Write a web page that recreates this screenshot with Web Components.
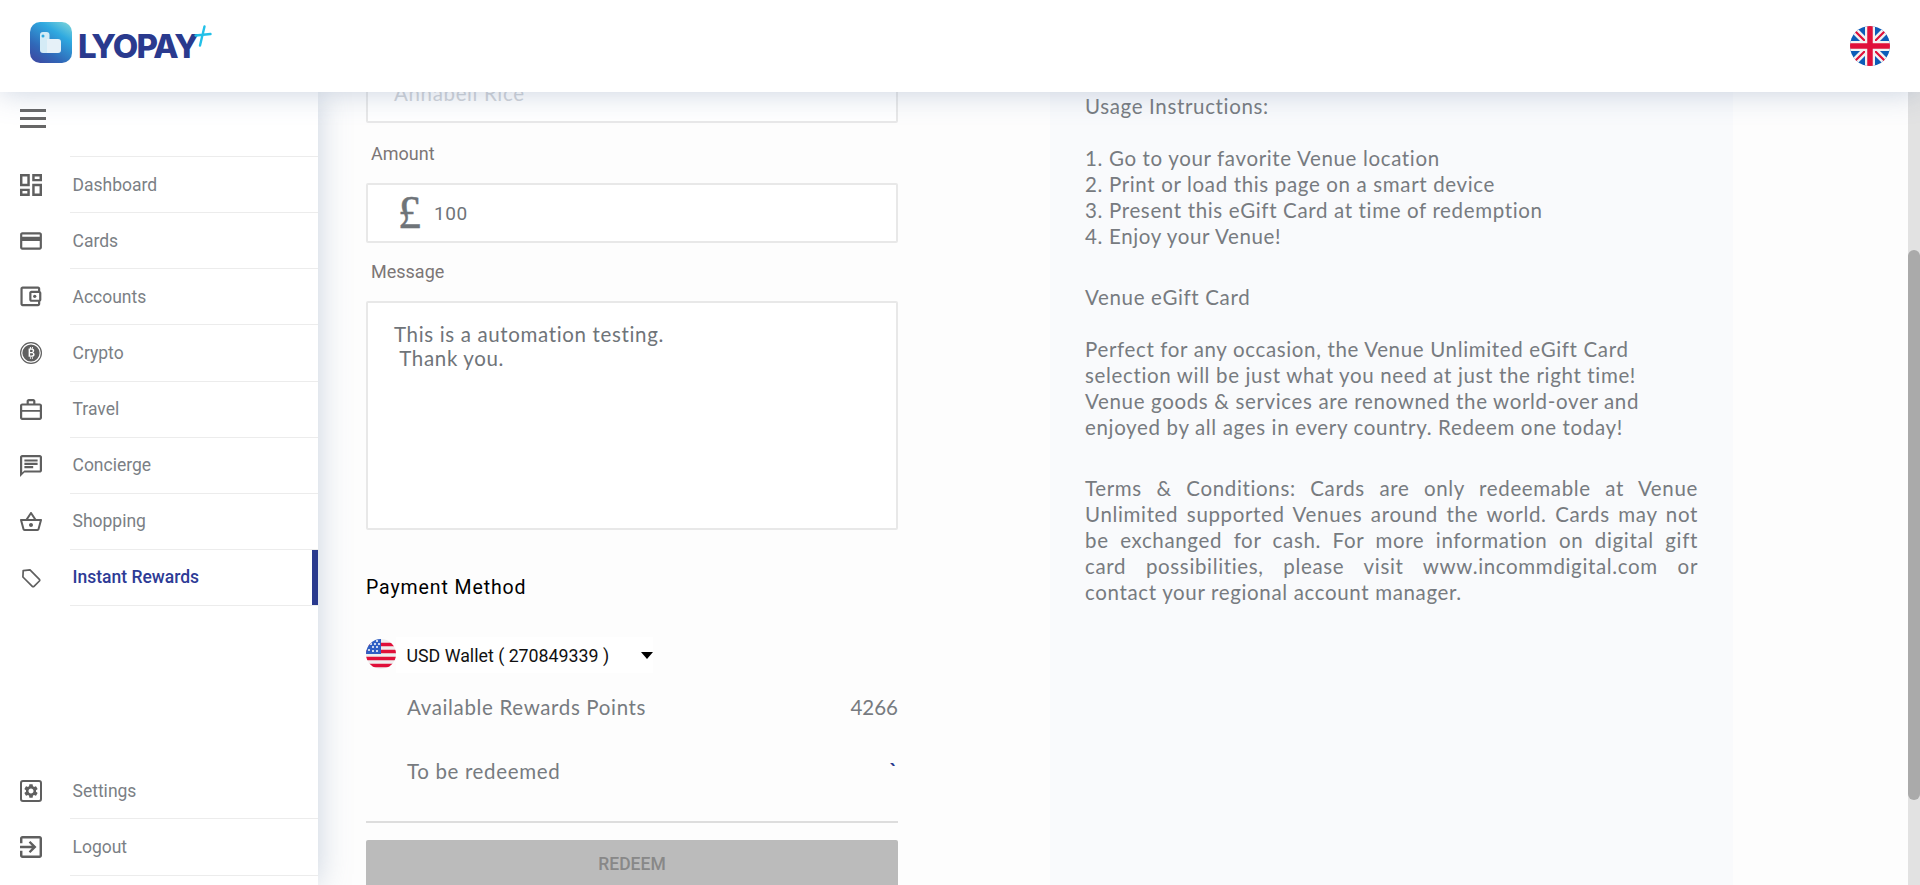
<!DOCTYPE html>
<html lang="en">
<head>
<meta charset="utf-8">
<title>Lyopay</title>
<style>
  html, body { margin: 0; height: 100%; overflow: hidden; background: #fdfdfd; }
  body { display: flex; flex-direction: column; font-family: "Roboto", sans-serif; }
</style>
</head>
<body>
<lp-header></lp-header>
<lp-shell>
  <lp-sidenav slot="nav">
    <lp-navitem label="Dashboard"><svg viewBox="3 3 18 18" width="22" height="22" fill="#5f5f5f"><path d="M19 5v2h-4V5h4M9 5v6H5V5h4m10 8v6h-4v-6h4M9 17v2H5v-2h4M21 3h-8v6h8V3zM11 3H3v10h8V3zm10 8h-8v10h8V11zm-10 4H3v6h8v-6z"/></svg></lp-navitem>
    <lp-navitem label="Cards"><svg viewBox="2 1 20 22" width="22" height="24" fill="#5f5f5f"><path d="M20 4H4c-1.11 0-1.99.89-1.99 2L2 18c0 1.11.89 2 2 2h16c1.11 0 2-.89 2-2V6c0-1.11-.89-2-2-2zm0 14H4v-6h16v6zm0-10H4V6h16v2z"/></svg></lp-navitem>
    <lp-navitem label="Accounts"><svg viewBox="2.6 2.6 20 20" width="22" height="22" fill="#5f5f5f"><path d="M21 7.28V5c0-1.1-.9-2-2-2H5c-1.11 0-2 .9-2 2v14c0 1.1.89 2 2 2h14c1.1 0 2-.9 2-2v-2.28c.59-.35 1-.98 1-1.72V9c0-.74-.41-1.37-1-1.72zM20 9v6h-7V9h7zM5 19V5h14v2h-6c-1.1 0-2 .9-2 2v6c0 1.1.9 2 2 2h6v2H5z"/><circle cx="16" cy="12" r="1.5"/></svg></lp-navitem>
    <lp-navitem label="Crypto"><svg viewBox="0 0 22 22" width="22" height="22"><circle cx="11" cy="11" r="10.4" fill="none" stroke="#5f5f5f" stroke-width="1.2"/><circle cx="11" cy="11" r="8.6" fill="#5f5f5f"/><path d="M8.6 6.4h3.2c1.5 0 2.4.9 2.4 2.1 0 .9-.5 1.6-1.2 1.9.9.3 1.6 1 1.6 2.1 0 1.5-1.1 2.3-2.8 2.3H8.6zm1.5 1.4v2.1h1.5c.7 0 1.1-.4 1.1-1s-.4-1.1-1.1-1.1zm0 3.4v2.2h1.7c.8 0 1.3-.4 1.3-1.1s-.5-1.1-1.3-1.1zM9.9 5h1v1.6h-1zm2 0h1v1.6h-1zm-2 10.2h1v1.6h-1zm2 0h1v1.6h-1z" fill="#fff"/></svg></lp-navitem>
    <lp-navitem label="Travel"><svg viewBox="2 2 20 20" width="22" height="22" fill="#5f5f5f"><path d="M14 6V4h-4v2h4zM4 8v11h16V8H4zm16-2c1.11 0 2 .89 2 2v11c0 1.11-.89 2-2 2H4c-1.11 0-2-.89-2-2l.01-11c0-1.11.88-2 1.99-2h4V4c0-1.11.89-2 2-2h4c1.11 0 2 .89 2 2v2h4z"/><path d="M3 12h18v1.6H3z"/></svg></lp-navitem>
    <lp-navitem label="Concierge"><svg viewBox="2 2 20 20" width="22" height="22" fill="#5f5f5f"><path d="M20 2H4c-1.1 0-2 .9-2 2v18l4-4h14c1.1 0 2-.9 2-2V4c0-1.1-.9-2-2-2zm0 14H6l-2 2V4h16v12z"/><path d="M6 12h8v2H6zm0-3h12v2H6zm0-3h12v2H6z"/></svg></lp-navitem>
    <lp-navitem label="Shopping"><svg viewBox="1 1 22 22" width="22" height="22" fill="#5f5f5f"><path d="M22 9h-4.79l-4.38-6.56c-.19-.28-.51-.42-.83-.42s-.64.14-.83.43L6.79 9H2c-.55 0-1 .45-1 1 0 .09.01.18.04.27l2.54 9.27c.23.84 1 1.46 1.92 1.46h13c.92 0 1.69-.62 1.93-1.46l2.54-9.27L23 10c0-.55-.45-1-1-1zM12 4.8L14.8 9H9.2L12 4.8zM18.5 19l-12.99.01L3.31 11H20.7l-2.2 8zM12 13c-1.1 0-2 .9-2 2s.9 2 2 2 2-.9 2-2-.9-2-2-2z"/></svg></lp-navitem>
    <lp-navitem label="Instant Rewards" active><svg viewBox="0 0 22 22" width="22" height="22" fill="none" stroke="#5f5f5f" stroke-width="1.7" stroke-linejoin="round"><path d="M3.2 3.6 10 2.9l9.4 9.4a1.2 1.2 0 0 1 0 1.7l-5.4 5.4a1.2 1.2 0 0 1-1.7 0L2.9 10z"/></svg></lp-navitem>
    <lp-navitem slot="bottom" label="Settings"><svg viewBox="0 0 22 22" width="22" height="22"><rect x="1" y="1" width="20" height="20" rx="2" fill="none" stroke="#5f5f5f" stroke-width="2"/><path transform="translate(2.6 2.6) scale(.7)" fill="#5f5f5f" d="M19.14 12.94c.04-.3.06-.61.06-.94 0-.32-.02-.64-.07-.94l2.03-1.58a.49.49 0 0 0 .12-.61l-1.92-3.32a.488.488 0 0 0-.59-.22l-2.39.96c-.5-.38-1.03-.7-1.62-.94l-.36-2.54a.484.484 0 0 0-.48-.41h-3.84c-.24 0-.43.17-.47.41l-.36 2.54c-.59.24-1.13.57-1.62.94l-2.39-.96c-.22-.08-.47 0-.59.22L2.74 8.87c-.12.21-.08.47.12.61l2.03 1.58c-.05.3-.09.63-.09.94s.02.64.07.94l-2.03 1.58a.49.49 0 0 0-.12.61l1.92 3.32c.12.22.37.29.59.22l2.39-.96c.5.38 1.03.7 1.62.94l.36 2.54c.05.24.24.41.48.41h3.84c.24 0 .44-.17.47-.41l.36-2.54c.59-.24 1.13-.56 1.62-.94l2.39.96c.22.08.47 0 .59-.22l1.92-3.32c.12-.22.07-.47-.12-.61l-2.01-1.58zM12 15.6c-1.98 0-3.6-1.62-3.6-3.6s1.62-3.6 3.6-3.6 3.6 1.62 3.6 3.6-1.62 3.6-3.6 3.6z"/></svg></lp-navitem>
    <lp-navitem slot="bottom" label="Logout"><svg viewBox="3 3 18 18" width="22" height="22" fill="#5f5f5f"><path d="M10.09 15.59L11.5 17l5-5-5-5-1.41 1.41L12.67 11H3v2h9.67l-2.58 2.59zM19 3H5c-1.11 0-2 .9-2 2v4h2V5h14v14H5v-4H3v4c0 1.1.89 2 2 2h14c1.1 0 2-.9 2-2V5c0-1.1-.9-2-2-2z"/></svg></lp-navitem>
  </lp-sidenav>

  <lp-redeem-form slot="form"></lp-redeem-form>

  <lp-info slot="info">
    <p>Usage Instructions:<br><br>1. Go to your favorite Venue location<br>2. Print or load this page on a smart device<br>3. Present this eGift Card at time of redemption<br>4. Enjoy your Venue!</p>
    <p>Venue eGift Card<br><br>Perfect for any occasion, the Venue Unlimited eGift Card<br>selection will be just what you need at just the right time!<br>Venue goods &amp; services are renowned the world-over and<br>enjoyed by all ages in every country. Redeem one today!</p>
    <div class="j">Terms &amp; Conditions: Cards are only redeemable at Venue</div>
    <div class="j">Unlimited supported Venues around the world. Cards may not</div>
    <div class="j">be exchanged for cash. For more information on digital gift</div>
    <div class="j">card possibilities, please visit www.incommdigital.com or</div>
    <div>contact your regional account manager.</div>
  </lp-info>
</lp-shell>

<script>
class LpHeader extends HTMLElement {
  constructor() {
    super();
    this.attachShadow({ mode: "open" });
    this.shadowRoot.innerHTML = `
      <style>
        :host {
          display: flex;
          flex: none;
          align-items: center;
          justify-content: space-between;
          height: 92px;
          padding: 0 30px;
          background: #fff;
          box-shadow: 0 0 30px rgba(110, 135, 170, .38);
          position: relative;
          z-index: 3;
        }
        .logo { display: flex; align-items: center; margin-top: -8px; }
        .name {
          margin: 8px 0 0 6px;
          font: 800 33px/1 "Inter", sans-serif;
          letter-spacing: -1.8px;
          color: #2a3a8e;
        }
        .plus { margin: -12px 0 0 -3px; }
        svg { display: block; }
      </style>
      <div class="logo">
        <svg width="42" height="41" viewBox="0 0 42 41">
          <defs>
            <linearGradient id="lg" x1="0.9" y1="0" x2="0.25" y2="1">
              <stop offset="0" stop-color="#7ad3da"/>
              <stop offset=".3" stop-color="#2fa9e0"/>
              <stop offset=".75" stop-color="#3068b8"/>
              <stop offset="1" stop-color="#3b4fa6"/>
            </linearGradient>
          </defs>
          <rect width="42" height="41" rx="10" fill="url(#lg)"/>
          <path d="M10 13a3 3 0 0 1 3-3h3.5a3 3 0 0 1 3 3v18h-6.5a3 3 0 0 1-3-3z" fill="#d4ebf6"/>
          <path d="M17 17h11a3 3 0 0 1 3 3v8a3 3 0 0 1-3 3H17z" fill="#e6f1f8"/>
          <circle cx="13" cy="14" r="1.5" fill="#2fa9e0"/>
        </svg>
        <span class="name">LYOPAY</span>
        <svg class="plus" width="18" height="22" viewBox="0 0 18 22" fill="none" stroke="#22c0e8" stroke-width="2.4" stroke-linecap="round"><path d="M1.5 10.5 16.5 9M10.5 1.5 6 20.5"/></svg>
      </div>
      <svg width="40" height="40" viewBox="0 0 40 40">
        <defs><clipPath id="uk"><circle cx="20" cy="20" r="20"/></clipPath></defs>
        <g clip-path="url(#uk)">
          <rect width="40" height="40" fill="#0d5cb8"/>
          <path d="M0 0 40 40M40 0 0 40" stroke="#f2f2f2" stroke-width="7"/>
          <path d="M2 2 16 16M24 24 38 38M38 2 24 16M16 24 2 38" stroke="#e0103a" stroke-width="2.2"/>
          <path d="M20 0V40M0 20H40" stroke="#f2f2f2" stroke-width="10"/>
          <path d="M20 0V40M0 20H40" stroke="#e0103a" stroke-width="5.5"/>
        </g>
      </svg>`;
  }
}

class LpShell extends HTMLElement {
  constructor() {
    super();
    this.attachShadow({ mode: "open" });
    this.shadowRoot.innerHTML = `
      <style>
        :host { display: flex; flex: 1; min-height: 0; }
        .view {
          flex: 1;
          display: grid;
          grid-template-columns: 732px 683px 1fr;
          overflow: hidden;
          background: #fdfdfd;
        }
        .track { flex: none; width: 12px; background: #e2e2e2; padding-top: 158px; box-sizing: border-box; }
        .thumb { height: 550px; background: #aaa; border-radius: 6px; }
      </style>
      <slot name="nav"></slot>
      <div class="view">
        <slot name="form"></slot>
        <slot name="info"></slot>
      </div>
      <div class="track"><div class="thumb"></div></div>`;
  }
}

class LpSidenav extends HTMLElement {
  constructor() {
    super();
    this.attachShadow({ mode: "open" });
    this.shadowRoot.innerHTML = `
      <style>
        :host {
          display: flex;
          flex-direction: column;
          flex: none;
          width: 318px;
          padding-bottom: 9.5px;
          box-sizing: border-box;
          background: #fff;
          box-shadow: 0 0 30px rgba(110, 135, 170, .36);
          position: relative;
          z-index: 2;
        }
        .burger { display: grid; gap: 5px; width: 26px; padding: 17px 0 28px 20px; }
        .burger i { display: block; height: 3px; background: #666; }
        .list::before { content: ""; display: block; height: 1px; margin-left: 70px; background: #ececec; }
        .bottom { margin-top: auto; }
      </style>
      <div class="burger"><i></i><i></i><i></i></div>
      <div class="list"><slot></slot></div>
      <div class="bottom"><slot name="bottom"></slot></div>`;
  }
}

class LpNavitem extends HTMLElement {
  constructor() {
    super();
    this.attachShadow({ mode: "open" });
    const active = this.hasAttribute("active");
    this.shadowRoot.innerHTML = `
      <style>
        :host { display: flex; align-items: center; height: 56.125px; }
        .icon { display: flex; flex: none; width: 22px; margin: 0 28px 0 20px; }
        .text {
          flex: 1;
          align-self: stretch;
          display: flex;
          align-items: center;
          padding-left: 2.5px;
          border-bottom: 1px solid #ececec;
          box-sizing: border-box;
          font-size: 17.5px;
          font-weight: ${active ? 500 : 400};
          color: ${active ? "#2d3b96" : "#7b7f85"};
          ${active ? "box-shadow: inset -6px 0 0 #2a3a8e;" : ""}
        }
      </style>
      <span class="icon"><slot></slot></span>
      <span class="text">${this.getAttribute("label")}</span>`;
  }
}

class LpField extends HTMLElement {
  constructor() {
    super();
    this.attachShadow({ mode: "open" });
    const h = this.getAttribute("height") || 60;
    const gap = this.getAttribute("gap") || 60;
    this.shadowRoot.innerHTML = `
      <style>
        :host { display: block; }
        .label {
          padding: 0 0 ${60 - gap}px 5px;
          height: ${gap}px;
          box-sizing: border-box;
          display: flex;
          align-items: center;
          font-size: 18px;
          color: #7c7676;
        }
        .box {
          display: flex;
          align-items: center;
          height: ${h}px;
          box-sizing: border-box;
          border: 2px solid #e8e8e8;
          border-radius: 2px;
          background: #fff;
        }
        :host(:not([label])) .label { display: none; }
      </style>
      <div class="label">${this.getAttribute("label") || ""}</div>
      <div class="box"><slot></slot></div>`;
  }
}

class LpRedeemForm extends HTMLElement {
  constructor() {
    super();
    this.attachShadow({ mode: "open" });
    this.shadowRoot.innerHTML = `
      <style>
        :host { display: block; padding: 0 0 0 48px; width: 532px; margin-top: -29px; font-family: "Roboto", sans-serif; }
        .ph { padding-left: 26px; font: 20.5px "Lato", sans-serif; letter-spacing: .65px; color: #d0d3d8; }
        .pound { margin-left: 30px; font: 46px/1 "Liberation Serif", serif; -webkit-text-stroke: .5px #6f7479; color: #6f7479; }
        .amount { margin-left: 13px; font-size: 19px; letter-spacing: .6px; color: #6f7479; }
        .msg {
          align-self: flex-start;
          padding: 19px 0 0 26px;
          font: 20.5px/24px "Lato", sans-serif;
          letter-spacing: .65px;
          white-space: pre;
          color: #6f7479;
        }
        h3 { margin: 44px 0 0; font-size: 19.5px; line-height: 28px; font-weight: 400; letter-spacing: .9px; color: #000; }
        .wallet { display: flex; align-items: center; margin-top: 37px; height: 30px; }
        .wallet svg { display: block; flex: none; }
        .select { display: flex; align-items: center; margin-top: 2px; padding-left: 10.5px; height: 36px; background: #fff; font-size: 17.8px; color: #111; }
        .caret { width: 0; height: 0; margin-left: 32px; border: 6px solid transparent; border-top: 7px solid #000; border-bottom: 0; }
        .row {
          display: flex;
          justify-content: space-between;
          padding-left: 41px;
          font: 20.5px/26px "Lato", sans-serif;
          letter-spacing: .65px;
          color: #777b80;
        }
        .num { letter-spacing: 0; }
        .r1 { margin-top: 25px; }
        .r2 { margin-top: 38px; }
        .tick { color: #2a3a8e; font-weight: 700; margin-top: -1px; }
        hr { margin: 37px 0 0; border: 0; height: 2px; background: #ddd; }
        .btn {
          margin-top: 17px;
          height: 60px;
          display: flex;
          justify-content: center;
          padding-top: 14px;
          box-sizing: border-box;
          border-radius: 2px;
          background: #bbb;
          font-size: 17.5px;
          font-weight: 500;
          color: #888;
        }
      </style>
      <lp-field><span class="ph">Annabell Rice</span></lp-field>
      <lp-field label="Amount"><span class="pound">£</span><span class="amount">100</span></lp-field>
      <lp-field label="Message" gap="58" height="229"><div class="msg">This is a automation testing.
 Thank you.</div></lp-field>
      <h3>Payment Method</h3>
      <div class="wallet">
        <svg width="30" height="30" viewBox="0 0 30 30">
          <defs><clipPath id="us"><circle cx="15" cy="15" r="15"/></clipPath></defs>
          <g clip-path="url(#us)">
            <rect width="30" height="30" fill="#efefef"/>
            <path d="M0 5.5H30M0 12.5H30M0 19.5H30M0 26.5H30" stroke="#e0103a" stroke-width="3.5"/>
            <rect width="15" height="15" fill="#2f5fc4"/>
            <g fill="#fff"><circle cx="5" cy="5" r="1"/><circle cx="9" cy="5" r="1"/><circle cx="13" cy="5" r="1"/><circle cx="11" cy="2" r="1"/><circle cx="7" cy="8" r="1"/><circle cx="11" cy="8" r="1"/><circle cx="3" cy="11" r="1"/><circle cx="7" cy="12" r="1"/><circle cx="11" cy="12" r="1"/></g>
          </g>
        </svg>
        <div class="select">USD Wallet ( 270849339 )<span class="caret"></span></div>
      </div>
      <div class="row r1"><span>Available Rewards Points</span><span class="num">4266</span></div>
      <div class="row r2"><span>To be redeemed</span><span class="tick">\`</span></div>
      <hr>
      <div class="btn">REDEEM</div>`;
  }
}

class LpInfo extends HTMLElement {
  constructor() {
    super();
    this.attachShadow({ mode: "open" });
    this.shadowRoot.innerHTML = `
      <style>
        :host {
          display: block;
          padding: 1px 35px 0;
          background: #f9fafc;
          font: 20.5px/26px "Lato", sans-serif;
          letter-spacing: .65px;
          color: #777b80;
        }
        ::slotted(p) { margin: 0 0 35px; }
        ::slotted(.j) { text-align: justify; text-align-last: justify; }
      </style>
      <slot></slot>`;
  }
}

customElements.define("lp-header", LpHeader);
customElements.define("lp-shell", LpShell);
customElements.define("lp-sidenav", LpSidenav);
customElements.define("lp-navitem", LpNavitem);
customElements.define("lp-field", LpField);
customElements.define("lp-redeem-form", LpRedeemForm);
customElements.define("lp-info", LpInfo);
</script>
</body>
</html>
